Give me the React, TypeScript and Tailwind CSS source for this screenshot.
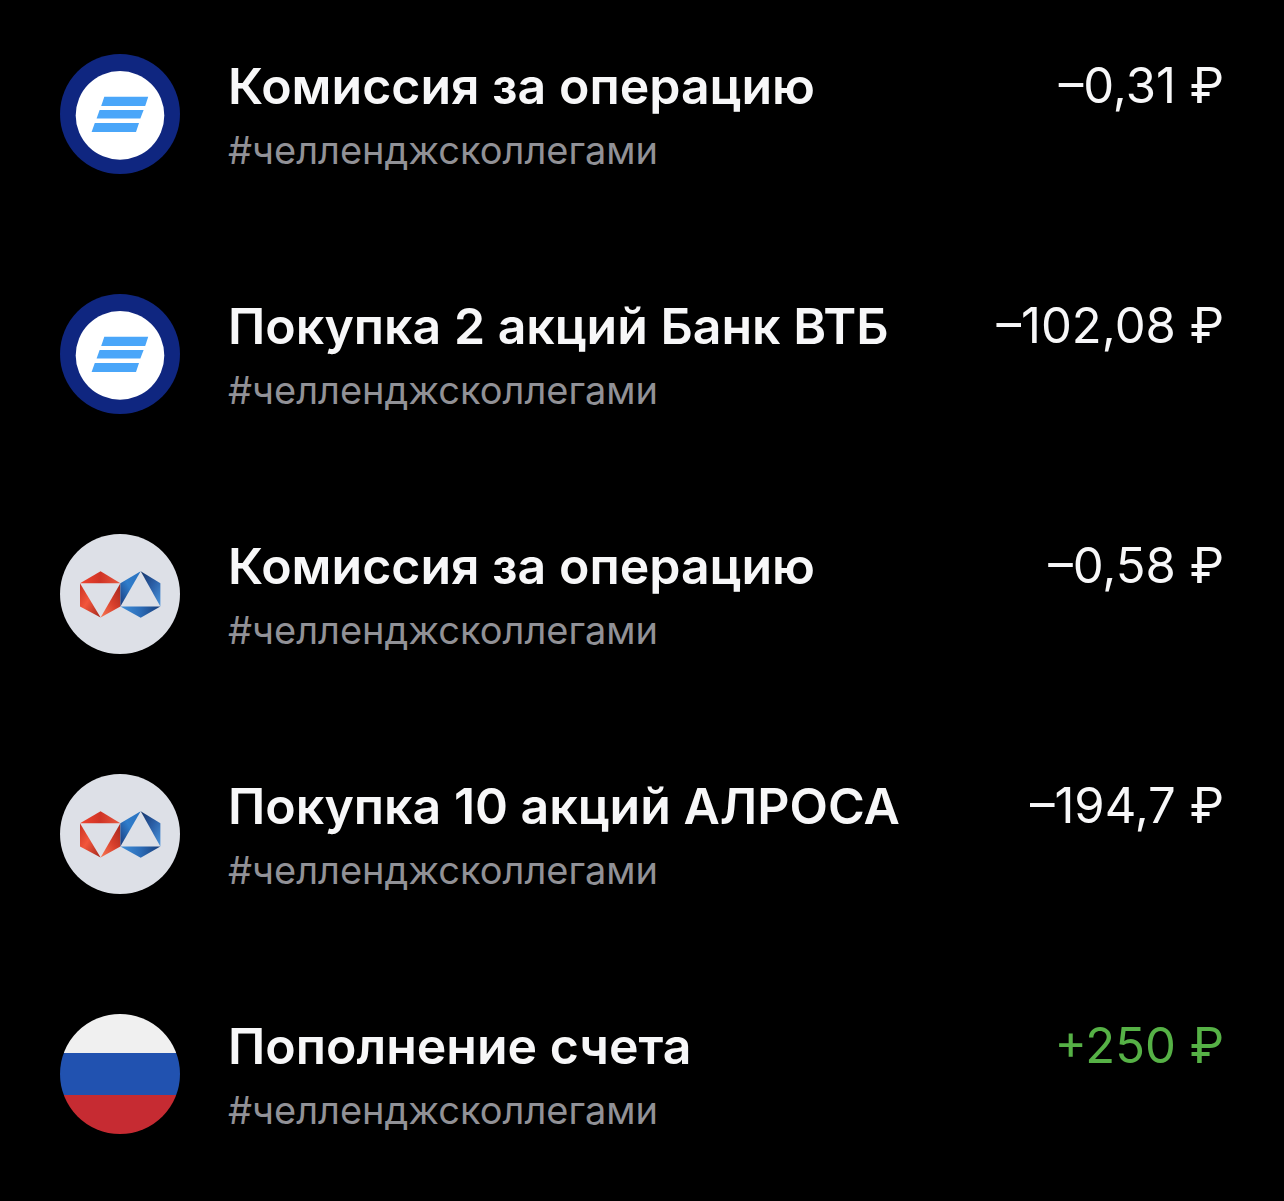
type LogoKind = 'vtb' | 'alrosa' | 'rub';

interface Operation {
  id: number;
  logo: LogoKind;
  title: string;
  tag: string;
  amount: string;
  income?: boolean;
}

const operations: Operation[] = [
  { id: 1, logo: 'vtb', title: 'Комиссия за операцию', tag: '#челленджсколлегами', amount: '–0,31 ₽' },
  { id: 2, logo: 'vtb', title: 'Покупка 2 акций Банк ВТБ', tag: '#челленджсколлегами', amount: '–102,08 ₽' },
  { id: 3, logo: 'alrosa', title: 'Комиссия за операцию', tag: '#челленджсколлегами', amount: '–0,58 ₽' },
  { id: 4, logo: 'alrosa', title: 'Покупка 10 акций АЛРОСА', tag: '#челленджсколлегами', amount: '–194,7 ₽' },
  { id: 5, logo: 'rub', title: 'Пополнение счета', tag: '#челленджсколлегами', amount: '+250 ₽', income: true },
];

function VtbLogo() {
  return (
    <svg viewBox="0 0 120 120" className="size-[120px] shrink-0" aria-hidden="true">
      <circle cx="60" cy="60" r="60" fill="#0f2680" />
      <circle cx="60" cy="61.4" r="44.3" fill="#fff" />
      <g fill="#4aa6f9">
        <path d="M44.3 42.8H88.2L85.2 52H41.2z" />
        <path d="M39.6 56H83.6L80.4 64.6H36.6z" />
        <path d="M34.8 69H79L76 78H31.6z" />
      </g>
    </svg>
  );
}

function AlrosaLogo() {
  return (
    <svg viewBox="0 0 120 120" className="size-[120px] shrink-0" aria-hidden="true">
      <defs>
        <linearGradient id="red-top" x1="0" y1="0" x2="1" y2="0">
          <stop offset="0" stopColor="#f0452f" />
          <stop offset="0.5" stopColor="#d03426" />
          <stop offset="1" stopColor="#e85a42" />
        </linearGradient>
        <linearGradient id="red-left" x1="0" y1="0" x2="1" y2="1">
          <stop offset="0" stopColor="#c9301f" />
          <stop offset="0.45" stopColor="#f2563c" />
          <stop offset="1" stopColor="#a3261c" />
        </linearGradient>
        <linearGradient id="red-right" x1="1" y1="0" x2="0" y2="1">
          <stop offset="0" stopColor="#a3261c" />
          <stop offset="0.5" stopColor="#d9402c" />
          <stop offset="1" stopColor="#fa7a55" />
        </linearGradient>
        <linearGradient id="blue-left" x1="1" y1="0" x2="0" y2="1">
          <stop offset="0" stopColor="#2a72c0" />
          <stop offset="0.5" stopColor="#2f7cca" />
          <stop offset="1" stopColor="#173a7c" />
        </linearGradient>
        <linearGradient id="blue-right" x1="0" y1="0" x2="1" y2="1">
          <stop offset="0" stopColor="#163468" />
          <stop offset="0.5" stopColor="#2a5ea6" />
          <stop offset="1" stopColor="#4b95dc" />
        </linearGradient>
        <linearGradient id="blue-bottom" x1="0" y1="0" x2="1" y2="0">
          <stop offset="0" stopColor="#4090da" />
          <stop offset="0.5" stopColor="#2c6db8" />
          <stop offset="1" stopColor="#173c78" />
        </linearGradient>
      </defs>
      <circle cx="60" cy="60" r="60" fill="#dde0e7" />
      <path d="M20 49.2 40.6 37.2 60.4 49.2z" fill="url(#red-top)" />
      <path d="M20 49.2V72.4L40.6 83.6z" fill="url(#red-left)" />
      <path d="M60.4 49.2V72.4L40.6 83.6z" fill="url(#red-right)" />
      <path d="M80.7 37.2 60.4 49.2V72.4z" fill="url(#blue-left)" />
      <path d="M80.7 37.2 100.4 49.2V72.4z" fill="url(#blue-right)" />
      <path d="M60.4 72.4H100.4L80.7 83.8z" fill="url(#blue-bottom)" />
    </svg>
  );
}

function RubLogo() {
  return (
    <span className="flex size-[120px] shrink-0 flex-col overflow-hidden rounded-full">
      <span className="h-[39px] bg-[#f0f0f0]" />
      <span className="h-[42px] bg-[#2152b0]" />
      <span className="h-[39px] bg-[#c62b32]" />
    </span>
  );
}

function Logo({ kind }: { kind: LogoKind }) {
  if (kind === 'vtb') return <VtbLogo />;
  if (kind === 'alrosa') return <AlrosaLogo />;
  return <RubLogo />;
}

function OperationRow({ operation }: { operation: Operation }) {
  return (
    <li className="flex items-start gap-12">
      <Logo kind={operation.logo} />
      <div className="flex min-w-0 flex-1 flex-col">
        <div className="flex items-start justify-between gap-6 leading-[64px]">
          <h2 className="text-[50px] font-semibold">{operation.title}</h2>
          <span
            className={
              operation.income
                ? 'text-[49px] whitespace-nowrap text-[#56b146]'
                : 'text-[49px] whitespace-nowrap'
            }
          >
            {operation.amount}
          </span>
        </div>
        <p className="mt-1 text-[38px] leading-[56px] text-[#919196]">{operation.tag}</p>
      </div>
    </li>
  );
}

export default function App() {
  return (
    <main className="min-h-screen bg-black px-[60px] pt-[54px] pb-12 font-['Inter',sans-serif] text-[#f7f7f8]">
      <ul className="flex flex-col gap-[116px]">
        {operations.map((operation) => (
          <OperationRow key={operation.id} operation={operation} />
        ))}
      </ul>
    </main>
  );
}
